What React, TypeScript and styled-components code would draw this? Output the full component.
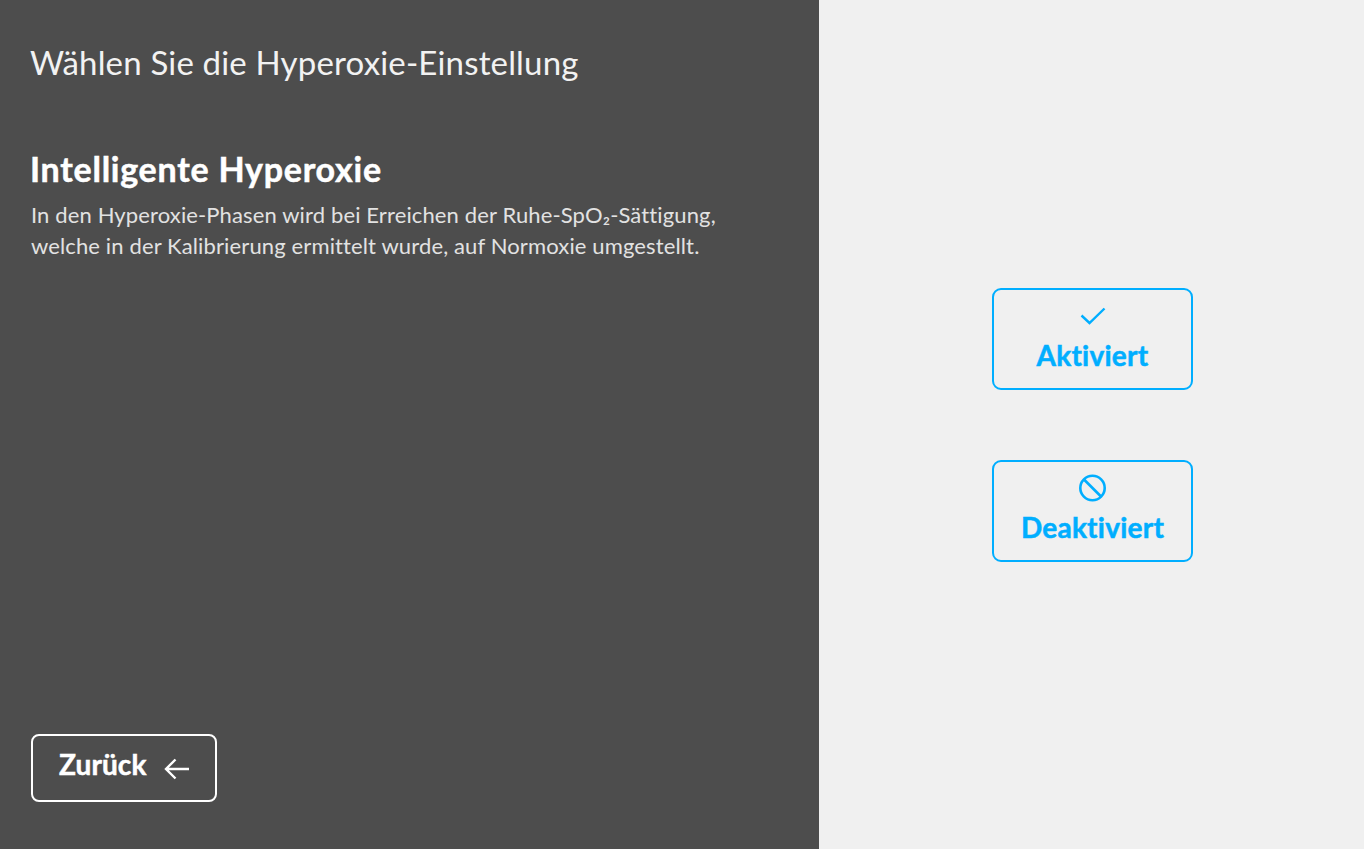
import React from 'react';
import styled, { createGlobalStyle } from 'styled-components';

const GlobalStyle = createGlobalStyle`
  html, body {
    margin: 0;
    padding: 0;
    height: 100%;
    font-family: 'Lato', 'Noto Sans', sans-serif;
  }
`;

const Screen = styled.div`
  display: grid;
  grid-template-columns: 819px 1fr;
  width: 1364px;
  height: 849px;
  overflow: hidden;
`;

const InfoPanel = styled.section`
  display: flex;
  flex-direction: column;
  box-sizing: border-box;
  padding: 43px 31px 47px;
  background-color: #4d4d4d;
  color: #fff;
`;

const Heading = styled.h1`
  margin: 0 0 0 -1px;
  font-size: 33px;
  line-height: 39px;
  font-weight: 400;
  letter-spacing: 0.17px;
  color: #f2f2f2;
`;

const SubHeading = styled.h2`
  margin: 67px 0 0 -1px;
  font-size: 34px;
  line-height: 40px;
  font-weight: 700;
  letter-spacing: 0.75px;
  -webkit-text-stroke: 0.5px #fff;
`;

const Description = styled.p`
  margin: 10px 0 0;
  font-size: 22px;
  line-height: 31px;
  font-weight: 400;
  letter-spacing: 0.13px;
  color: #e2e2e2;
`;

const BackButton = styled.button`
  display: flex;
  align-items: center;
  justify-content: flex-start;
  gap: 17px;
  width: 186px;
  height: 68px;
  margin-top: auto;
  box-sizing: border-box;
  padding: 0 0 8px 26px;
  border: 2px solid #fff;
  border-radius: 8px;
  background: transparent;
  color: #fff;
  font: 700 28px 'Lato', sans-serif;
  letter-spacing: 0.1px;
  -webkit-text-stroke: 0.5px #fff;
`;

const OptionPanel = styled.section`
  display: flex;
  flex-direction: column;
  align-items: center;
  justify-content: center;
  gap: 70px;
  padding: 1px 0 0 2px;
  background-color: #f0f0f0;
`;

const OptionButton = styled.button`
  display: flex;
  flex-direction: column;
  align-items: center;
  justify-content: flex-start;
  gap: 4px;
  width: 201px;
  height: 102px;
  box-sizing: border-box;
  padding: 11px 0 0;
  border: 2px solid #00aeff;
  border-radius: 9px;
  background: transparent;
  color: #00aeff;
  font: 700 28px/36px 'Lato', sans-serif;
  letter-spacing: 0.25px;
  -webkit-text-stroke: 0.5px #00aeff;
`;

const CheckIcon = () => (
  <svg width="32" height="32" viewBox="0 0 32 32" fill="none" stroke="currentColor" strokeWidth="2.4">
    <path d="M4.5 14.5 L12.5 22 L27.5 7.5" />
  </svg>
);

const BlockedIcon = () => (
  <svg width="32" height="32" viewBox="0 0 32 32" fill="none" stroke="currentColor" strokeWidth="2.6">
    <circle cx="15.5" cy="15" r="12.2" />
    <path d="M7 6.5 L24 23.5" />
  </svg>
);

const ArrowIcon = () => (
  <svg width="28" height="24" viewBox="0 0 28 24" fill="none" stroke="currentColor" strokeWidth="2.4" style={{ marginTop: 10 }}>
    <path d="M26 12 H3 M12.5 2.5 L3 12 L12.5 21.5" />
  </svg>
);

export default function App() {
  return (
    <>
      <GlobalStyle />
      <Screen>
        <InfoPanel>
          <Heading>Wählen Sie die Hyperoxie-Einstellung</Heading>
          <SubHeading>Intelligente Hyperoxie</SubHeading>
          <Description>
            In den Hyperoxie-Phasen wird bei Erreichen der Ruhe-SpO₂-Sättigung,
            <br />
            welche in der Kalibrierung ermittelt wurde, auf Normoxie umgestellt.
          </Description>
          <BackButton>
            Zurück
            <ArrowIcon />
          </BackButton>
        </InfoPanel>
        <OptionPanel>
          <OptionButton>
            <CheckIcon />
            Aktiviert
          </OptionButton>
          <OptionButton>
            <BlockedIcon />
            Deaktiviert
          </OptionButton>
        </OptionPanel>
      </Screen>
    </>
  );
}
